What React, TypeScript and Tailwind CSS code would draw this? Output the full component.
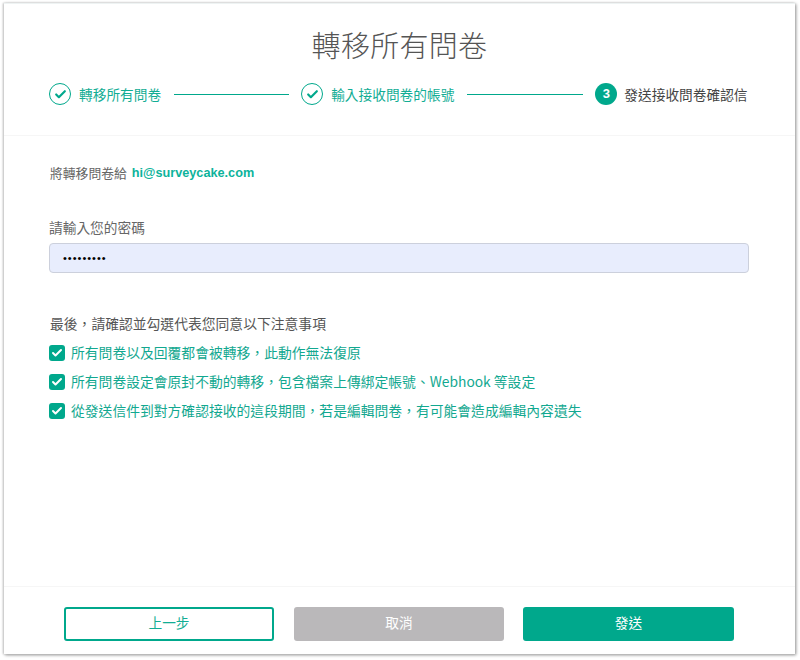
import { Check } from 'lucide-react'

const font = "font-['Noto_Sans_CJK_TC','Liberation_Sans',sans-serif]"
const comma = '\uFF0C'

const notices = [
  `所有問卷以及回覆都會被轉移${comma}此動作無法復原`,
  `所有問卷設定會原封不動的轉移${comma}包含檔案上傳綁定帳號、Webhook 等設定`,
  `從發送信件到對方確認接收的這段期間${comma}若是編輯問卷${comma}有可能會造成編輯內容遺失`,
]

function DoneStep({ label }: { label: string }) {
  return (
    <div className="flex items-center gap-[8px] shrink-0">
      <span className="w-[22px] h-[22px] rounded-full border border-[#00a88c] flex items-center justify-center">
        <Check size={13} strokeWidth={4} className="text-[#00a88c]" />
      </span>
      <span className="text-[13.7px] text-[#12ad94]">{label}</span>
    </div>
  )
}

export default function App() {
  return (
    <div lang="zh-Hant" className={`${font} w-[800px] h-[660px] bg-white pt-[3px] pl-[4px]`}>
      <div className="w-[791px] h-[651px] bg-white flex flex-col border-t border-t-[#eef3f3] shadow-[-1px_0_2px_#c4c4c4,1px_1px_3px_#8a8a8a]">
        <div className="h-[132px] shrink-0 border-b border-[#f6f6f6] px-[45px]">
          <h1 className="text-center text-[29px] leading-[40px] mt-[20px] font-light text-[#555555] tracking-[0.3px]">
            轉移所有問卷
          </h1>
          <div className="flex items-center mt-[19px] h-[22px]">
            <DoneStep label="轉移所有問卷" />
            <div className="w-[115px] h-px bg-[#00a88c] ml-[13px] mr-[12px]" />
            <DoneStep label="輸入接收問卷的帳號" />
            <div className="w-[116px] h-px bg-[#00a88c] ml-[13px] mr-[12px]" />
            <div className="flex items-center gap-[7px] shrink-0">
              <span className="w-[22px] h-[22px] rounded-full bg-[#00a88c] text-white text-[13px] font-bold flex items-center justify-center font-['Liberation_Sans',sans-serif]">
                3
              </span>
              <span className="text-[13.7px] text-[#444444]">發送接收問卷確認信</span>
            </div>
          </div>
        </div>

        <div className="flex-1 px-[46px] pt-[27px]">
          <div className="flex items-center gap-[5px] h-[20px]">
            <span className="text-[12.8px] text-[#666666]">將轉移問卷給</span>
            <span className="pt-[1px] text-[12.7px] font-bold text-[#0db39b] font-['Liberation_Sans',sans-serif]">hi@surveycake.com</span>
          </div>

          <div className="-ml-[1px] text-[13.7px] text-[#666666] mt-[34px] leading-[20px]">請輸入您的密碼</div>
          <div className="mt-[6px] -ml-[1px] w-[700px] h-[30px] rounded-[4px] bg-[#e8edfd] border border-[#ccd0dc] flex items-center pl-[13px] text-[11px] text-black tracking-[1px] font-['Liberation_Sans',sans-serif]">
            •••••••••
          </div>

          <div className="text-[13.8px] text-[#555555] mt-[40px] leading-[20px]">最後{comma}請確認並勾選代表您同意以下注意事項</div>
          <div className="mt-[5px] -ml-[1px] flex flex-col">
            {notices.map((notice) => (
              <div key={notice} className="flex items-center gap-[6px] h-[29px]">
                <span className="w-[16px] h-[16px] rounded-[3px] bg-[#00a88c] flex items-center justify-center shrink-0">
                  <Check size={12} strokeWidth={4} className="text-white" />
                </span>
                <span className="text-[13.8px] text-[#12a890]">{notice}</span>
              </div>
            ))}
          </div>
        </div>

        <div className="h-[68px] shrink-0 border-t border-[#f6f6f6] flex items-start pt-[20px] pl-[60px]">
          <button className="w-[210px] h-[34px] pb-[3px] rounded-[3px] border-2 border-[#00a88c] bg-white text-[13.7px] text-[#12ad94]">上一步</button>
          <button className="ml-[20px] w-[210px] h-[34px] pb-[3px] rounded-[3px] bg-[#bab8ba] text-[13.7px] text-white">取消</button>
          <button className="ml-[19px] w-[211px] h-[34px] pb-[3px] rounded-[3px] bg-[#00a88c] text-[13.7px] text-white">發送</button>
        </div>
      </div>
    </div>
  )
}
